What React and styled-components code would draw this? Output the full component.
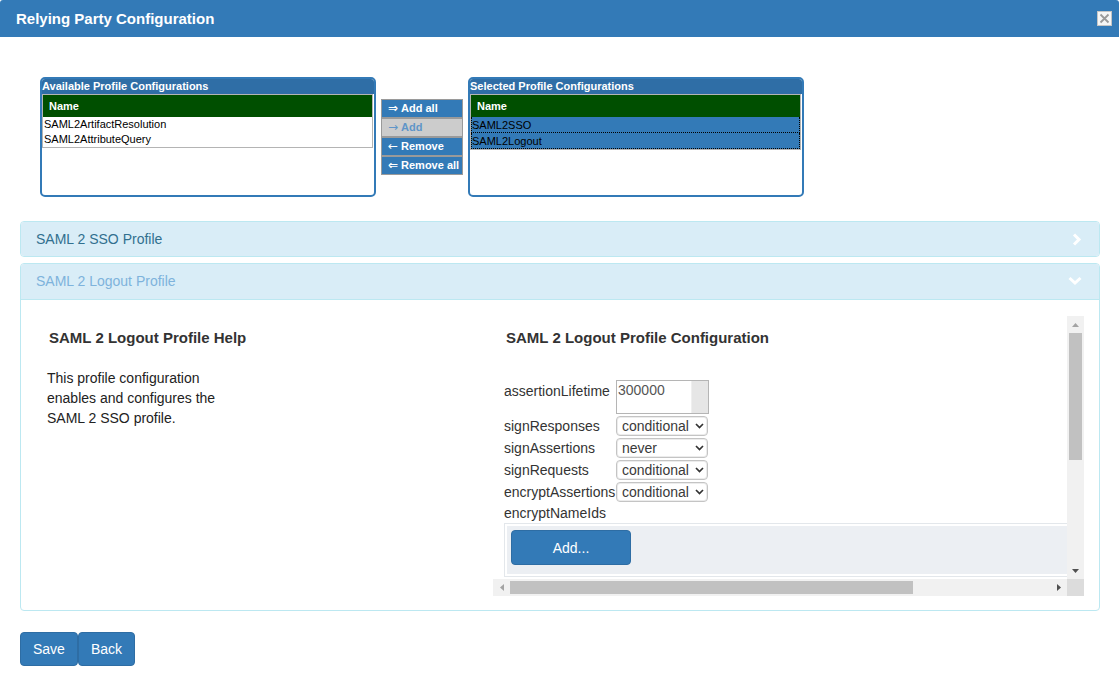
import React from 'react';
import styled, { createGlobalStyle } from 'styled-components';

const Global = createGlobalStyle`
  html, body { margin: 0; padding: 0; background: #fff; }
  body { font-family: "Liberation Sans", Arial, sans-serif; color: #333; font-size: 14px; }
  * { box-sizing: border-box; }
`;

const Dialog = styled.div`
  width: 1119px;
  min-height: 683px;
  display: flex;
  flex-direction: column;
`;

const TitleBar = styled.div`
  height: 37px;
  background: #337ab7;
  border-radius: 3px 3px 0 0;
  display: flex;
  align-items: center;
  justify-content: space-between;
  padding: 0 7px 0 16px;
`;

const Title = styled.h1`
  margin: 0;
  font-size: 15px;
  font-weight: bold;
  color: #fff;
`;

const CloseButton = styled.button`
  width: 15px;
  height: 15px;
  padding: 0;
  border: 1px solid #c5c5c5;
  background: #f6f6f6;
  display: flex;
  align-items: center;
  justify-content: center;
  cursor: pointer;
`;

const Content = styled.div`
  padding: 40px 19px 0 20px;
  display: flex;
  flex-direction: column;
`;

const PickRow = styled.div`
  display: flex;
  align-items: flex-start;
  gap: 5px;
  padding-left: 20px;
`;

const ListBox = styled.div`
  width: 336px;
  height: 120px;
  border: 2px solid #337ab7;
  border-radius: 5px;
  overflow: hidden;
  background: #fff;
  display: flex;
  flex-direction: column;
`;

const ListTitle = styled.div`
  height: 15px;
  line-height: 15px;
  background: #2f6ea6;
  color: #fff;
  font-size: 11px;
  font-weight: bold;
`;

const ListTable = styled.div`
  width: 331px;
  border: 1px solid #b4b4b4;
  display: flex;
  flex-direction: column;
`;

const ListHeader = styled.div`
  height: 22px;
  line-height: 22px;
  background: #004f00;
  color: #fff;
  font-size: 11px;
  font-weight: bold;
  padding-left: 6px;
`;

const ListRow = styled.div`
  height: 15px;
  line-height: 15px;
  font-size: 11px;
  color: #000;
  background: #fff;
  padding-left: 1px;
`;

const SelectedRow = styled.div`
  height: 16px;
  padding-top: 2px;
  line-height: 13px;
  font-size: 11px;
  color: #000;
  background: #337ab7;
  border: 1px dotted #000;
  border-top: none;
`;

const ButtonStack = styled.div`
  margin-top: 22px;
  width: 82px;
  display: flex;
  flex-direction: column;
`;

const MoveButton = styled.button`
  height: 19px;
  padding: 0 6px;
  border: 1px solid #9a9a9a;
  background: ${p => (p.$disabled ? '#cccccc' : '#337ab7')};
  color: ${p => (p.$disabled ? '#5f95c8' : '#fff')};
  font-family: "Liberation Sans", Arial, sans-serif;
  font-size: 11px;
  font-weight: bold;
  text-align: left;
  line-height: 17px;
  white-space: nowrap;
  cursor: pointer;
`;

const Arrow = styled.span`
  font-family: "DejaVu Sans", sans-serif;
  font-weight: ${p => (p.$thin ? 'normal' : 'bold')};
  font-size: 12px;
  margin-right: 3px;
`;

const PanelGroup = styled.div`
  margin-top: 24px;
  display: flex;
  flex-direction: column;
  gap: 6px;
`;

const Panel = styled.div`
  border: 1px solid #bce8f1;
  border-radius: 4px;
  overflow: hidden;
  background: #fff;
`;

const PanelHeading = styled.div`
  height: ${p => (p.$open ? '36px' : '34px')};
  background: #d9edf7;
  border-bottom: ${p => (p.$open ? '1px solid #bce8f1' : 'none')};
  display: flex;
  align-items: center;
  justify-content: space-between;
  padding: ${p => (p.$open ? '0 17px 1px 15px' : '0 17px 0 15px')};
  color: ${p => p.$color};
  font-size: 14px;
`;

const PanelBody = styled.div`
  display: flex;
  padding: 16px 15px 14px 15px;
`;

const HelpColumn = styled.div`
  width: 457px;
  flex: none;
  padding-left: 11px;
`;

const SectionHeading = styled.h4`
  margin: 14px 0 0 0;
  padding-left: ${p => p.$indent || 0}px;
  font-size: 15px;
  line-height: 16px;
  font-weight: bold;
  color: #333;
  white-space: nowrap;
`;

const HelpText = styled.p`
  margin: 22px 0 0 0;
  width: 190px;
  font-size: 14px;
  line-height: 20px;
  color: #222;
`;

/* scroll frame with drawn scrollbars */
const ScrollFrame = styled.div`
  flex: 1;
  min-width: 0;
  height: 280px;
  display: grid;
  grid-template-columns: minmax(0, 1fr) 17px;
  grid-template-rows: 263px 17px;
`;

const Viewport = styled.div`
  overflow: hidden;
`;

const VBar = styled.div`
  background: #f1f1f1;
  display: flex;
  flex-direction: column;
`;

const HBar = styled.div`
  background: #f1f1f1;
  display: flex;
`;

const BarButton = styled.div`
  width: 17px;
  height: 17px;
  flex: none;
  display: flex;
  align-items: center;
  justify-content: center;
`;

const VTrack = styled.div`
  flex: 1;
  padding: 0 2px;
`;

const HTrack = styled.div`
  flex: 1;
  padding: 2px 0;
`;

const Thumb = styled.div`
  background: #c1c1c1;
  width: ${p => p.$w};
  height: ${p => p.$h};
`;

const Corner = styled.div`
  background: #dcdcdc;
`;

const ScrollContent = styled.div`
  width: 772px;
  height: 474px;
  padding: 0 12px 0 11px;
  display: flex;
  flex-direction: column;
`;

const FormGrid = styled.div`
  margin-top: ${p => p.$top || 0}px;
  display: grid;
  grid-template-columns: 112px max-content;
  row-gap: 2px;
  align-items: center;
`;

const FieldLabel = styled.label`
  font-size: 14px;
  line-height: 16px;
  color: #333;
  white-space: nowrap;
  align-self: ${p => (p.$top ? 'start' : 'center')};
  padding-top: ${p => (p.$top ? '3px' : p.$full ? '1px' : '0')};
  grid-column: ${p => (p.$full ? '1 / span 2' : 'auto')};
`;

const TextAreaBox = styled.div`
  width: 93px;
  height: 34px;
  border: 1px solid #b5b5b5;
  display: flex;
  background: #fff;
`;

const TextArea = styled.textarea`
  flex: 1;
  min-width: 0;
  border: none;
  resize: none;
  overflow: hidden;
  padding: 1px 1px;
  font-family: "Liberation Sans", Arial, sans-serif;
  font-size: 14px;
  line-height: 16px;
  color: #555;
  outline: none;
`;

const FakeTrack = styled.div`
  width: 17px;
  background: #e6e6e6;
  border-left: 1px solid #efefef;
`;

const SelectWrap = styled.div`
  position: relative;
  width: 92px;
  height: 20px;
`;

const Select = styled.select`
  appearance: none;
  -webkit-appearance: none;
  width: 92px;
  height: 20px;
  border: 1px solid #c4c4c4;
  box-shadow: inset 0 0 0 1px #ececec;
  border-radius: 4px;
  background: #fff;
  padding: 0 0 0 5px;
  font-family: "Liberation Sans", Arial, sans-serif;
  font-size: 14px;
  color: #3a3a3a;
  outline: none;
`;

const Chevron = styled.svg`
  position: absolute;
  right: 4px;
  top: 7px;
  pointer-events: none;
`;

const ListField = styled.div`
  margin-top: 2px;
  border: 1px solid #e3e7eb;
  padding: 2px;
  width: 100%;
`;

const ListFieldInner = styled.div`
  background: #eceff3;
  padding: 4px 4px 9px 4px;
`;

const PrimaryButton = styled.button`
  width: ${p => p.$w || 'auto'};
  height: ${p => p.$h || '34px'};
  padding: 6px 12px;
  border: 1px solid #2e6da4;
  border-radius: 4px;
  background: #337ab7;
  color: #fff;
  font-family: "Liberation Sans", Arial, sans-serif;
  font-size: 14px;
  line-height: 20px;
  cursor: pointer;
`;

const FooterBar = styled.div`
  margin-top: 21px;
  display: flex;
`;

const ChevronSelect = () => (
  <Chevron width="9" height="6" viewBox="0 0 9 6">
    <path d="M1 1 L4.5 4.5 L8 1" fill="none" stroke="#333" strokeWidth="1.7" />
  </Chevron>
);

const SelectField = ({ value, options }) => (
  <SelectWrap>
    <Select defaultValue={value}>
      {options.map(o => (
        <option key={o}>{o}</option>
      ))}
    </Select>
    <ChevronSelect />
  </SelectWrap>
);

const Tri = ({ dir, color }) => {
  const pts = {
    up: '0,4 3.5,0 7,4',
    down: '0,0 7,0 3.5,4',
    left: '4,0 4,7 0,3.5',
    right: '0,0 4,3.5 0,7',
  }[dir];
  const vertical = dir === 'up' || dir === 'down';
  return (
    <svg width={vertical ? 7 : 4} height={vertical ? 4 : 7} viewBox={vertical ? '0 0 7 4' : '0 0 4 7'}>
      <polygon points={pts} fill={color} />
    </svg>
  );
};

const opts = ['always', 'conditional', 'never'];

export default function App() {
  return (
    <Dialog>
      <Global />
      <TitleBar>
        <Title>Relying Party Configuration</Title>
        <CloseButton aria-label="close">
          <svg width="11" height="11" viewBox="0 0 11 11">
            <path d="M1.5 1.5 L9.5 9.5 M9.5 1.5 L1.5 9.5" stroke="#9a9a9a" strokeWidth="1.8" />
          </svg>
        </CloseButton>
      </TitleBar>
      <Content>
        <PickRow>
          <ListBox>
            <ListTitle>Available Profile Configurations</ListTitle>
            <ListTable>
              <ListHeader>Name</ListHeader>
              <ListRow>SAML2ArtifactResolution</ListRow>
              <ListRow>SAML2AttributeQuery</ListRow>
            </ListTable>
          </ListBox>
          <ButtonStack>
            <MoveButton><Arrow>⇒</Arrow>Add all</MoveButton>
            <MoveButton $disabled><Arrow $thin>→</Arrow>Add</MoveButton>
            <MoveButton><Arrow $thin>←</Arrow>Remove</MoveButton>
            <MoveButton><Arrow>⇐</Arrow>Remove all</MoveButton>
          </ButtonStack>
          <ListBox>
            <ListTitle>Selected Profile Configurations</ListTitle>
            <ListTable>
              <ListHeader>Name</ListHeader>
              <SelectedRow>SAML2SSO</SelectedRow>
              <SelectedRow>SAML2Logout</SelectedRow>
            </ListTable>
          </ListBox>
        </PickRow>

        <PanelGroup>
          <Panel>
            <PanelHeading $color="#31708f">
              <span>SAML 2 SSO Profile</span>
              <svg width="10" height="13" viewBox="0 0 10 13">
                <path d="M2 1.5 L7 6.5 L2 11.5" fill="none" stroke="#fff" strokeWidth="3" />
              </svg>
            </PanelHeading>
          </Panel>
          <Panel>
            <PanelHeading $open $color="#7eb3dc">
              <span>SAML 2 Logout Profile</span>
              <svg width="14" height="10" viewBox="0 0 14 10">
                <path d="M1.5 2 L7 7 L12.5 2" fill="none" stroke="#fff" strokeWidth="3" />
              </svg>
            </PanelHeading>
            <PanelBody>
              <HelpColumn>
                <SectionHeading $indent={2}>SAML 2 Logout Profile Help</SectionHeading>
                <HelpText>This profile configuration enables and configures the SAML 2 SSO profile.</HelpText>
              </HelpColumn>
              <ScrollFrame>
                <Viewport>
                  <ScrollContent>
                    <SectionHeading $indent={2}>SAML 2 Logout Profile Configuration</SectionHeading>
                    <FormGrid $top={34}>
                      <FieldLabel $top>assertionLifetime</FieldLabel>
                      <TextAreaBox>
                        <TextArea defaultValue="300000" />
                        <FakeTrack />
                      </TextAreaBox>
                      <FieldLabel>signResponses</FieldLabel>
                      <SelectField value="conditional" options={opts} />
                      <FieldLabel>signAssertions</FieldLabel>
                      <SelectField value="never" options={opts} />
                      <FieldLabel>signRequests</FieldLabel>
                      <SelectField value="conditional" options={opts} />
                      <FieldLabel>encryptAssertions</FieldLabel>
                      <SelectField value="conditional" options={opts} />
                      <FieldLabel $full>encryptNameIds</FieldLabel>
                    </FormGrid>
                    <ListField>
                      <ListFieldInner>
                        <PrimaryButton $w="120px" $h="35px">Add...</PrimaryButton>
                      </ListFieldInner>
                    </ListField>
                  </ScrollContent>
                </Viewport>
                <VBar>
                  <BarButton><Tri dir="up" color="#a3a3a3" /></BarButton>
                  <VTrack><Thumb $w="100%" $h="127px" /></VTrack>
                  <BarButton><Tri dir="down" color="#505050" /></BarButton>
                </VBar>
                <HBar>
                  <BarButton><Tri dir="left" color="#a3a3a3" /></BarButton>
                  <HTrack><Thumb $w="403px" $h="100%" /></HTrack>
                  <BarButton><Tri dir="right" color="#505050" /></BarButton>
                </HBar>
                <Corner />
              </ScrollFrame>
            </PanelBody>
          </Panel>
        </PanelGroup>

        <FooterBar>
          <PrimaryButton>Save</PrimaryButton>
          <PrimaryButton>Back</PrimaryButton>
        </FooterBar>
      </Content>
    </Dialog>
  );
}
